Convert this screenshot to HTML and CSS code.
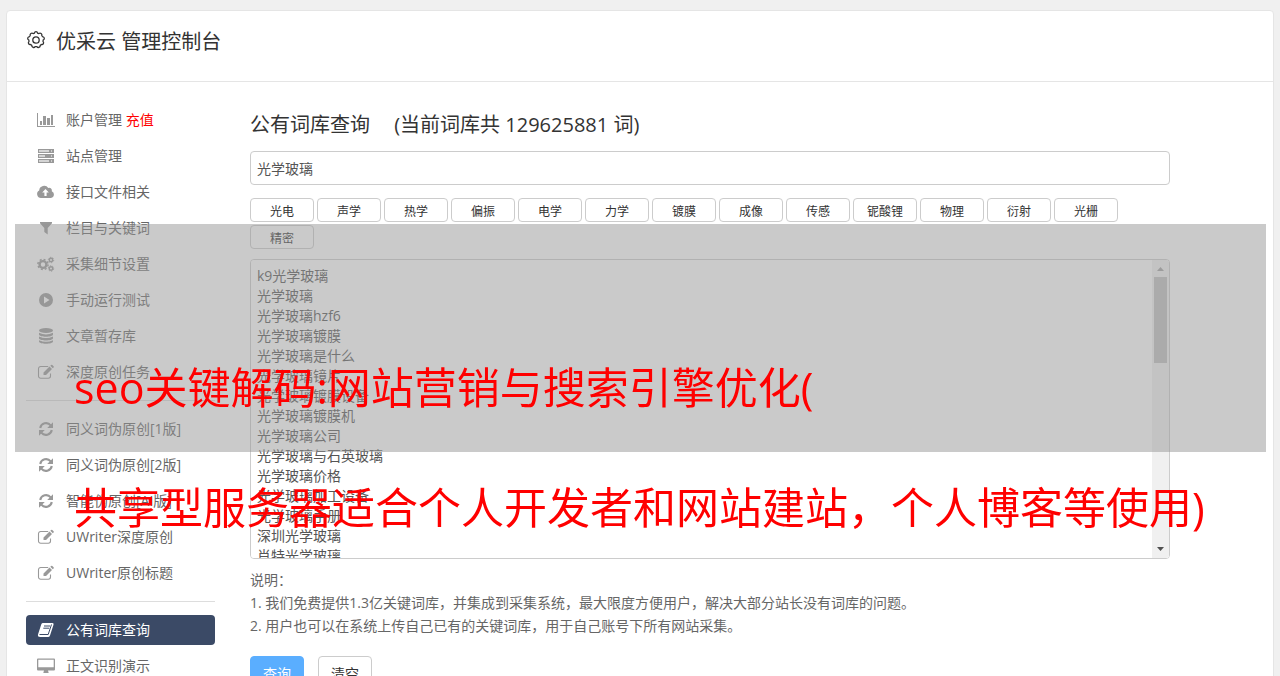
FILE: index.html
```html
<!DOCTYPE html>
<html lang="zh-CN">
<head>
  <meta charset="UTF-8">
  <title>优采云 管理控制台</title>
  <link rel="stylesheet" href="styles.css">
</head>
<body>

<!-- shared icons -->
<svg class="sprite" aria-hidden="true">
  <symbol id="i-edit" viewBox="0 0 20 16">
    <path d="M14.5 9.500v2.500a2.200 2.200 0 0 1-2.200 2.200H4.700A2.200 2.200 0 0 1 2.500 12V4.700a2.200 2.200 0 0 1 2.200-2.200h7.500" fill="none" stroke="currentColor" stroke-width="1.100"/>
    <path d="M7.500 8.500l6-6 2.500 2.500-6 6H7.500zM14.300 1.800l.8-.8q.6-.5 1.200 0l1.300 1.300q.5.6 0 1.200l-.8.8z"/>
  </symbol>
  <symbol id="i-refresh" viewBox="0 0 20 16">
    <path d="M4.200 7a6 6 0 0 1 10.500-2.700M15.800 9A6 6 0 0 1 5.300 11.700" fill="none" stroke="currentColor" stroke-width="2.100"/>
    <path d="M17 1.200V7h-5.800zM3 14.800V9h5.800z"/>
  </symbol>
</svg>

<div class="panel">
  <header class="panel-head">
    <svg class="gear" viewBox="0 0 20 20" aria-hidden="true">
      <path d="M8.400 3.200Q8.700 1.700 10 1.700T11.600 3.200Q12.200 3.500 12.800 3.600Q14 2.700 15.100 3.500T15.800 5.500Q16.200 6.100 16.500 6.700Q18 6.900 18.300 8.200T17.200 10Q17.100 10.800 17 11.300Q18 12.500 17.400 13.600T15.300 14.500Q14.900 15 14.300 15.400Q14.200 17 12.900 17.400T10.900 16.600Q10 16.700 9.100 16.600Q8.400 17.900 7.100 17.400T5.700 15.400Q5.100 15 4.700 14.500Q3.200 14.700 2.600 13.600T3 11.300Q2.900 10.800 2.800 10Q1.400 9.500 1.700 8.200T3.500 6.700Q3.800 6.100 4.200 5.500Q3.800 4.300 4.900 3.500T7.200 3.600Q7.800 3.500 8.400 3.200z"/>
      <circle cx="10" cy="10" r="3.200"/>
    </svg>
    <h1>优采云 管理控制台</h1>
  </header>

  <div class="panel-body">
    <nav class="sidebar">
      <a href="#">
        <svg viewBox="0 0 20 16"><path d="M1 1h1v13h17v1H1zM4 9h2v4H4zM7 4h3v9H7zM11 6h3v7h-3zM15 3h2v10h-2z"/></svg>
        <span>账户管理 <b>充值</b></span>
      </a>
      <a href="#">
        <svg viewBox="0 0 20 16"><path d="M2 1h16v4H2zM2 6h16v4H2zM2 11h16v4H2z"/><path d="M3 2h10v2H3zM3 7h6v2H3zM3 12h10v2H3z" fill="#d4d4d4"/><path d="M15 2.500h1v1h-1zM15 7.500h1v1h-1zM15 12.500h1v1h-1z" fill="#fff"/></svg>
        <span>站点管理</span>
      </a>
      <a href="#">
        <svg viewBox="0 0 20 16"><path d="M5 14a4 4 0 0 1-1.800-7.500A5 5 0 0 1 12.300 4a2.700 2.700 0 0 1 3.500 3.300A3.500 3.500 0 0 1 15 14z"/><path d="M9.500 5l3.300 3.500h-2.200V12H8.400V8.500H6.200z" fill="#fff"/></svg>
        <span>接口文件相关</span>
      </a>
      <a href="#">
        <svg viewBox="0 0 20 16"><path d="M4 2h12v1.200L11.700 8v6.500L8.300 12V8L4 3.200z"/></svg>
        <span>栏目与关键词</span>
      </a>
      <a href="#">
        <svg viewBox="0 0 20 16">
          <g fill="none" stroke="currentColor">
            <circle cx="7" cy="8.500" r="3.400" stroke-width="2.400"/>
            <circle cx="7" cy="8.500" r="5.100" stroke-width="1.500" stroke-dasharray="2 2"/>
            <circle cx="15" cy="4" r="1.700" stroke-width="1.500"/>
            <circle cx="15" cy="4" r="2.700" stroke-width="1" stroke-dasharray="1.400 1.400"/>
            <circle cx="15" cy="12.500" r="1.700" stroke-width="1.500"/>
            <circle cx="15" cy="12.500" r="2.700" stroke-width="1" stroke-dasharray="1.400 1.400"/>
          </g>
        </svg>
        <span>采集细节设置</span>
      </a>
      <a href="#">
        <svg viewBox="0 0 20 16"><path fill-rule="evenodd" d="M10 1a7 7 0 1 1 0 14 7 7 0 0 1 0-14zM8 4.500v7L13.500 8z"/></svg>
        <span>手动运行测试</span>
      </a>
      <a href="#">
        <svg viewBox="0 0 20 16"><ellipse cx="10" cy="2.600" rx="7" ry="2.500"/><path d="M3 4.800q7 3.200 14 0v1.700c0 3-14 3-14 0zM3 8.500q7 3.200 14 0v1.700c0 3-14 3-14 0zM3 12.200q7 3.200 14 0v1.300c0 3-14 3-14 0z"/></svg>
        <span>文章暂存库</span>
      </a>
      <a href="#"><svg><use href="#i-edit"/></svg><span>深度原创任务</span></a>
      <hr>
      <a href="#"><svg><use href="#i-refresh"/></svg><span>同义词伪原创[1版]</span></a>
      <a href="#"><svg><use href="#i-refresh"/></svg><span>同义词伪原创[2版]</span></a>
      <a href="#"><svg><use href="#i-refresh"/></svg><span>智能伪原创[AI版]</span></a>
      <a href="#"><svg><use href="#i-edit"/></svg><span>UWriter深度原创</span></a>
      <a href="#"><svg><use href="#i-edit"/></svg><span>UWriter原创标题</span></a>
      <hr>
      <a href="#" class="active">
        <svg viewBox="0 0 20 16"><path d="M7 1h9.500q1.500.2 1 1.700L14 13.500q-.5 1.500-2 1.500H4.200Q1.500 15 2 12.500L5.300 2.300Q5.800 1 7 1z"/><path d="M8 4h6M7.300 6.200h6M3.500 12.500h8.700l3.300-10" fill="none" stroke="#3b4a66" stroke-width="1"/></svg>
        <span>公有词库查询</span>
      </a>
      <a href="#">
        <svg viewBox="0 0 20 16"><path fill-rule="evenodd" d="M2 .5h16q1 0 1 1v10q0 1-1 1h-6l.7 2.500H7.300l.7-2.500H2q-1 0-1-1v-10q0-1 1-1zM2.300 1.800v7.500h15.400V1.800z"/></svg>
        <span>正文识别演示</span>
      </a>
    </nav>

    <main class="content">
      <h2><label for="keyword">公有词库查询</label> <span>(当前词库共 129625881 词)</span></h2>
      <input id="keyword" class="field" type="text" value="光学玻璃">

      <div class="tags">
        <button>光电</button>
        <button>声学</button>
        <button>热学</button>
        <button>偏振</button>
        <button>电学</button>
        <button>力学</button>
        <button>镀膜</button>
        <button>成像</button>
        <button>传感</button>
        <button>铌酸锂</button>
        <button>物理</button>
        <button>衍射</button>
        <button>光栅</button>
        <button>精密</button>
      </div>

      <div class="result">
        <textarea class="field" aria-label="查询结果">k9光学玻璃
光学玻璃
光学玻璃hzf6
光学玻璃镀膜
光学玻璃是什么
光学玻璃镜片
光学玻璃镀膜设备
光学玻璃镀膜机
光学玻璃公司
光学玻璃与石英玻璃
光学玻璃价格
光学玻璃加工设备
光学玻璃手册
深圳光学玻璃
肖特光学玻璃</textarea>
        <div class="scrollbar">
          <svg viewBox="0 0 17 17"><path d="M5 11l3.500-4 3.500 4z" fill="#a3a3a3"/></svg>
          <div class="thumb"></div>
          <svg viewBox="0 0 17 17"><path d="M5 6l3.500 4L12 6z" fill="#505050"/></svg>
        </div>
      </div>

      <div class="note">
        <p>说明：</p>
        <p>1. 我们免费提供1.3亿关键词库，并集成到采集系统，最大限度方便用户，解决大部分站长没有词库的问题。</p>
        <p>2. 用户也可以在系统上传自己已有的关键词库，用于自己账号下所有网站采集。</p>
      </div>

      <div class="actions">
        <button class="primary">查询</button>
        <button>清空</button>
      </div>
    </main>
  </div>
</div>

<div class="banner">
  <p>seo关键解码:网站营销与搜索引擎优化(</p>
  <p>共享型服务器适合个人开发者和网站建站，个人博客等使用)</p>
</div>

</body>
</html>
```
FILE: styles.css
```css
* {
  box-sizing: border-box;
}

body {
  margin: 0;
  padding: 10px 6px;
  background: #f0f0f0;
  color: #333;
  font-family: "Open Sans", "Noto Sans CJK SC", sans-serif;
  font-size: 14px;
  position: relative;
}

h1, h2, p {
  margin: 0;
  font-weight: normal;
}

.sprite {
  display: none;
}

.panel {
  background: #fff;
  border: 1px solid #e5e5e5;
  border-radius: 4px;
}

.panel-head {
  display: flex;
  align-items: center;
  gap: 10px;
  height: 71px;
  padding: 0 19px 12px;
  border-bottom: 1px solid #e5e5e5;
}

.panel-head h1 {
  padding-top: 4px;
  font-size: 20px;
  line-height: 28px;
}

.gear {
  width: 20px;
  height: 20px;
  fill: none;
  stroke: #333;
  stroke-width: 1.3;
}

.panel-body {
  display: flex;
  gap: 35px;
  padding: 20px 19px;
}

.sidebar {
  flex: none;
  width: 189px;
}

.sidebar a {
  display: flex;
  align-items: center;
  gap: 10px;
  height: 30px;
  margin: 6px 0;
  padding: 0 10px;
  border-radius: 4px;
  color: #666;
  text-decoration: none;
}

.sidebar a:first-child {
  margin-top: 3px;
}

.sidebar span {
  padding-bottom: 2px;
}

.sidebar svg {
  width: 20px;
  height: 16px;
  color: #999;
  fill: currentColor;
}

.sidebar b {
  color: #f00;
  font-weight: normal;
}

.sidebar .active,
.sidebar .active svg {
  background: #3b4a66;
  color: #fff;
}

.sidebar hr {
  height: 1px;
  margin: 13px 0;
  border: 0;
  background: #ddd;
}

.content {
  flex: 1;
  min-width: 0;
  max-width: 920px;
}

.content h2 {
  margin: 9px 0 12px;
  font-size: 20px;
  line-height: 28px;
}

.content h2 span {
  margin-left: 19px;
}

.field {
  display: block;
  width: 100%;
  border: 1px solid #ccc;
  border-radius: 4px;
  background: #fff;
  color: #555;
  font: inherit;
  line-height: 20px;
}

input.field {
  height: 34px;
  padding: 0 6px;
}

.tags {
  display: flex;
  flex-wrap: wrap;
  gap: 3px;
  margin: 13px 0 10px;
}

.tags button {
  width: 64px;
  height: 24px;
  padding: 3px 0 0;
  border: 1px solid #ccc;
  border-radius: 4px;
  background: #fff;
  color: #333;
  font: inherit;
  font-size: 12px;
  line-height: 20px;
}

.result {
  position: relative;
}

textarea.field {
  height: 300px;
  padding: 6px;
  resize: none;
}

.scrollbar {
  position: absolute;
  top: 1px;
  right: 1px;
  bottom: 1px;
  width: 17px;
  display: flex;
  flex-direction: column;
  border-radius: 0 3px 3px 0;
  background: #f0f0f0;
}

.scrollbar svg {
  width: 17px;
  height: 17px;
}

.scrollbar .thumb {
  height: 86px;
  margin: 0 2px auto;
  background: #c1c1c1;
}

.note {
  margin: 9px 0 19px;
  color: #666;
  line-height: 23px;
}

.actions {
  display: flex;
  gap: 14px;
}

.actions button {
  width: 54px;
  height: 34px;
  padding: 0;
  border: 1px solid #ccc;
  border-radius: 4px;
  background: #fff;
  color: #333;
  font: inherit;
}

.actions .primary {
  border-color: #5aaeff;
  background: #5aaeff;
  color: #fff;
}

/* headline laid over the page */
.banner {
  position: absolute;
  top: 224px;
  left: 15px;
  right: 14px;
  height: 228px;
  padding: 104px 0 0 59px;
  background: rgba(150, 150, 150, 0.5);
  color: #f00;
  font-size: 43px;
  line-height: 120px;
  white-space: nowrap;
  pointer-events: none;
}
```
